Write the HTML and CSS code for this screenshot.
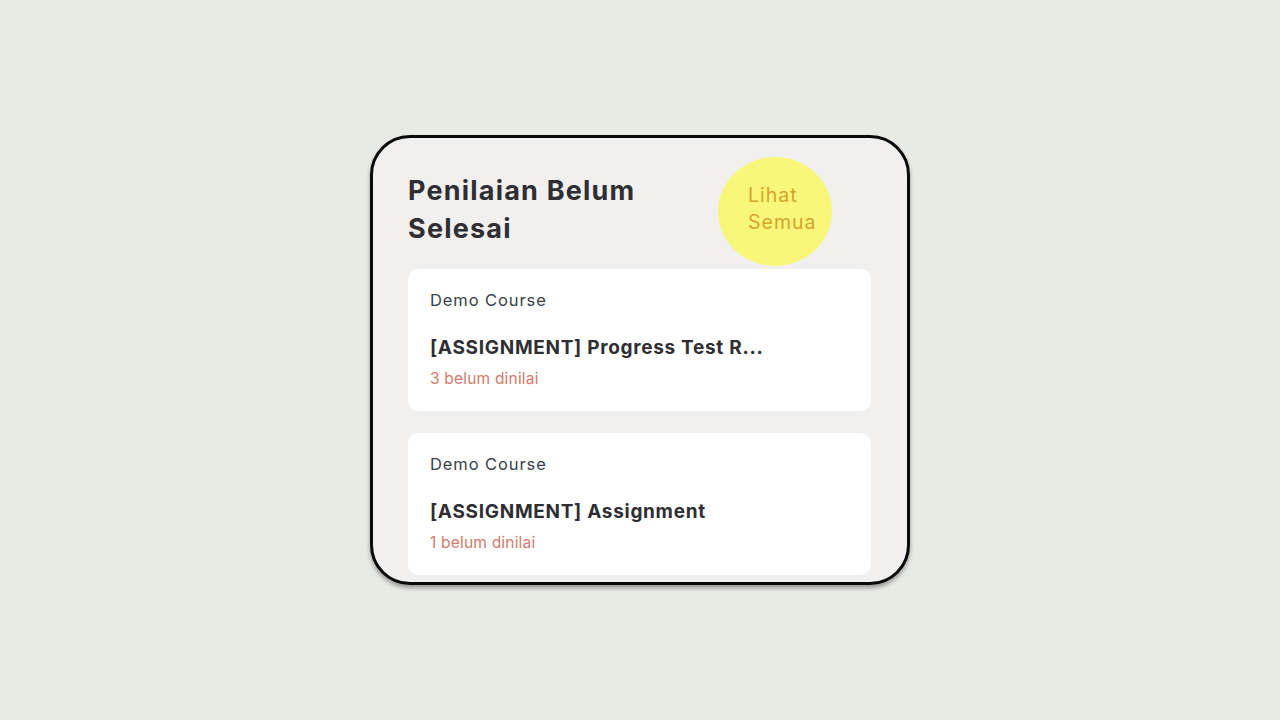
FILE: index.html
```html
<!DOCTYPE html>
<html lang="id">
<head>
<meta charset="utf-8">
<title>Penilaian Belum Selesai</title>
<link rel="stylesheet" href="styles.css">
</head>
<body>
<main class="stage">
  <section class="panel">
    <header class="panel-head">
      <h2 class="panel-title">Penilaian Belum Selesai</h2>
      <a class="see-all" href="#">Lihat<br>Semua</a>
    </header>
    <div class="list">
      <article class="item">
        <div class="course">Demo Course</div>
        <div class="task">[ASSIGNMENT] Progress Test R...</div>
        <div class="pending">3 belum dinilai</div>
      </article>
      <article class="item">
        <div class="course">Demo Course</div>
        <div class="task">[ASSIGNMENT] Assignment</div>
        <div class="pending">1 belum dinilai</div>
      </article>
    </div>
  </section>
</main>
</body>
</html>
```
FILE: styles.css
```css
html, body {
  margin: 0;
  padding: 0;
}
body {
  background: #e8eae4;
  font-family: Inter, "Noto Sans", sans-serif;
  width: 1280px;
  height: 720px;
  overflow: hidden;
}
.stage {
  display: flex;
  justify-content: center;
  padding-top: 135px;
}
.panel {
  box-sizing: border-box;
  width: 540px;
  height: 450px;
  background: #f1f0ee;
  border: 3px solid #0a0a0a;
  border-radius: 40px;
  padding: 19px 36px 0 35px;
  overflow: hidden;
  box-shadow: 0 3px 4px rgba(0, 0, 0, 0.35);
}
.panel-head {
  display: flex;
  justify-content: space-between;
  align-items: flex-start;
  padding-right: 39px;
}
.panel-title {
  margin: 15px 0 0 0;
  width: 270px;
  font-size: 27px;
  line-height: 38px;
  font-weight: 700;
  color: #2e2e33;
  letter-spacing: 1.2px;
}
.see-all {
  box-sizing: border-box;
  width: 114px;
  height: 109px;
  border-radius: 50%;
  background: #f8f77a;
  color: #d6a42c;
  text-decoration: none;
  font-size: 19.5px;
  line-height: 27px;
  letter-spacing: 1px;
  padding-left: 30px;
  padding-bottom: 6px;
  display: flex;
  align-items: center;
}
.list {
  display: flex;
  flex-direction: column;
  gap: 22px;
  margin-top: 3px;
}
.item {
  background: #ffffff;
  border-radius: 10px;
  padding: 21px 22px 22px;
}
.course {
  font-size: 16.5px;
  line-height: 20px;
  color: #3b3f48;
  letter-spacing: 0.9px;
}
.task {
  margin-top: 26px;
  font-size: 19px;
  line-height: 24px;
  font-weight: 700;
  color: #2e2e33;
  letter-spacing: 0.7px;
}
.pending {
  margin-top: 9px;
  font-size: 15.5px;
  line-height: 20px;
  color: #d27a6a;
  letter-spacing: 0.2px;
}
```
